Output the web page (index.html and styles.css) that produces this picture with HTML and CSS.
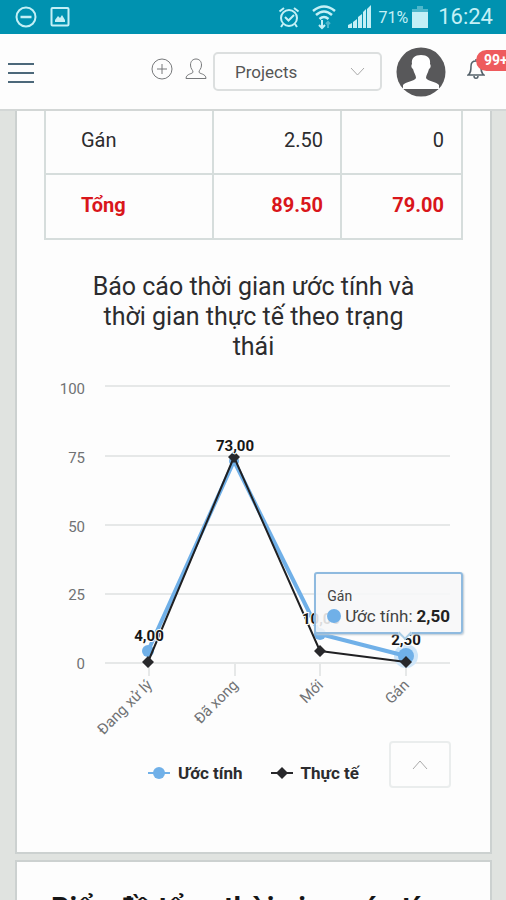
FILE: index.html
```html
<!DOCTYPE html>
<html lang="vi">
<head>
<meta charset="utf-8">
<meta name="viewport" content="width=device-width, initial-scale=1">
<title>Projects</title>
<link rel="stylesheet" href="styles.css">
</head>
<body>
<div class="status-bar">
  <svg width="22" height="22" viewBox="0 0 22 22" fill="none" stroke="currentColor" stroke-width="2"><circle cx="11" cy="11" r="9.5"/><path d="M5.500 11h11" stroke-width="2.500"/></svg>
  <svg class="picture" width="20" height="22" viewBox="0 0 20 22" fill="none" stroke="currentColor" stroke-width="2"><rect x="1.500" y="2" width="17" height="17.500" rx="1"/><path d="M5 16v-2l3-4 2 2 2-3 3 5v2z" fill="currentColor" stroke="none"/></svg>
  <svg class="push" width="22" height="24" viewBox="0 0 22 24" fill="none" stroke="currentColor" stroke-width="2"><circle cx="11" cy="13" r="8"/><path d="M1.500 6.500 6 3M20.500 6.500 16 3M5 19l-2 3M17 19l2 3M7 12l3.500 3.500L16 10"/></svg>
  <svg width="24" height="26" viewBox="0 0 24 26" fill="none" stroke="currentColor" stroke-width="2.500"><path d="M1 7Q12-2 23 7M4 11q8-7 16 0M7.500 15q4.500-4 9 0"/><path d="M10 16v8M7 21l3 3 3-3" stroke-width="2"/><path d="M16 24v-6M14 20l2-2 2 2" stroke-width="2" opacity=".4"/></svg>
  <svg class="signal" width="24" height="24" viewBox="0 0 24 24" fill="currentColor"><path d="M0 20l4-2v5H0zM5 17l4-3v9H5zM10 12l4-3v14h-4zM15 7l3-3v19h-3zM19 4l4-4v23h-4z"/></svg>
  <span class="percent">71%</span>
  <svg width="16" height="24" viewBox="0 0 16 24" fill="currentColor"><path d="M5 1h6v3h5v4H0V4h5z" opacity=".4"/><path d="M0 7h16v16H0z"/></svg>
  <span class="clock">16:24</span>
</div>

<header class="header">
  <button class="icon-button menu" aria-label="Menu"><svg width="26" height="22" viewBox="0 0 26 22" stroke="currentColor" stroke-width="2"><path d="M0 3h26M0 12h26M0 21h26"/></svg></button>
  <button class="icon-button add" aria-label="Add"><svg width="22" height="22" viewBox="0 0 22 22" fill="none" stroke="currentColor"><circle cx="11" cy="11" r="10"/><path d="M11 6v10M6 11h10"/></svg></button>
  <button class="icon-button user" aria-label="User"><svg width="22" height="22" viewBox="0 0 22 22" fill="none" stroke="currentColor"><path d="M8 14c0-2-2.500-3-2.500-7C5.500 3 8 1 11 1s5.500 2 5.500 6c0 4-2.500 5-2.500 7 0 2 7 1.500 7 6.500H1C1 15.500 8 16 8 14z"/></svg></button>
  <div class="picker">
    <select aria-label="Projects"><option>Projects</option></select>
    <svg width="15" height="9" viewBox="0 0 15 9" fill="none" stroke="currentColor"><path d="M1 1l6.500 7L14 1"/></svg>
  </div>
  <button class="icon-button avatar" aria-label="Account"><svg width="50" height="50" viewBox="0 0 50 50"><circle cx="25" cy="25" r="24.500" fill="#58585a"/><path d="M20 31c0-3-2-5-3-9-2-1-2-4-1-5-1-6 3-9 9-9s10 3 9 9c1 1 1 4-1 5-1 4-3 6-3 9 1 3 11 4 13 7v4H7v-4c2-3 12-4 13-7z" fill="#fff"/></svg></button>
  <button class="icon-button bell" aria-label="Notifications"><svg width="18" height="22" viewBox="0 0 18 22" fill="none" stroke="currentColor" stroke-width="1.500"><path d="M1 17c3-2 3-5 3-9 0-3 2-5 5-5s5 2 5 5c0 4 0 7 3 9zM9 3V1M7 18c0 3 4 3 4 0"/></svg><span class="badge">99+</span></button>
</header>

<main class="content">
  <section class="card report">
    <table class="totals">
      <colgroup><col class="col-name"><col class="col-estimate"><col></colgroup>
      <tbody>
        <tr><td>Gán</td><td>2.50</td><td>0</td></tr>
        <tr class="sum"><td>Tổng</td><td>89.50</td><td>79.00</td></tr>
      </tbody>
    </table>
    <h2 class="chart-title">Báo cáo thời gian ước tính và thời gian thực tế theo trạng thái</h2>
    <div class="chart">
      <svg class="plot" viewBox="0 0 419 370">
        <path class="grid" d="M61 16h345M61 86h345M61 155h345M61 224h345M61 293h345M105 293v13M191 293v13M276 293v13M362 293v13"/>
        <g class="axis" text-anchor="end">
          <text x="41" y="24">100</text><text x="41" y="93">75</text><text x="41" y="162">50</text><text x="41" y="230">25</text><text x="41" y="299">0</text>
          <text transform="translate(109 316) rotate(-45)">Đang xử lý</text>
          <text transform="translate(195 316) rotate(-45)">Đã xong</text>
          <text transform="translate(280 316) rotate(-45)">Mới</text>
          <text transform="translate(366 316) rotate(-45)">Gán</text>
        </g>
        <circle cx="362" cy="286" r="12" fill="#cfe6f9"/>
        <path class="line estimate" d="M104 281 190 91 276 264 362 286"/>
        <g fill="#70b0e8"><circle cx="104" cy="281" r="6"/><circle cx="190" cy="91" r="5"/><circle cx="276" cy="264" r="6"/><circle cx="362" cy="286" r="8"/></g>
        <path class="line actual" d="M104 292 190 87 276 281 362 292"/>
        <path fill="#28282b" d="M104 286l6 6-6 6-6-6zM190 81l6 6-6 6-6-6zM276 275l6 6-6 6-6-6zM362 286l6 6-6 6-6-6z"/>
        <g class="value" text-anchor="middle"><text x="105" y="271">4,00</text><text x="191" y="81">73,00</text><text x="277" y="254">10,00</text><text x="362" y="275">2,50</text></g>
      </svg>
      <div class="tooltip">
        <span class="tooltip-name">Gán</span>
        <span class="tooltip-value"><i class="dot"></i>Ước tính: <b>2,50</b></span>
      </div>
    </div>
    <div class="legend">
      <span class="legend-item"><svg width="22" height="14" viewBox="0 0 22 14"><path d="M0 7h22" stroke="#70b0e8" stroke-width="2"/><circle cx="11" cy="7" r="6" fill="#70b0e8"/></svg>Ước tính</span>
      <span class="legend-item"><svg width="22" height="14" viewBox="0 0 22 14"><path d="M0 7h22" stroke="#28282b" stroke-width="2"/><path d="M11 1l6 6-6 6-6-6z" fill="#28282b"/></svg>Thực tế</span>
    </div>
  </section>
  <section class="card next"><h2>Biểu đồ tổng thời gian ước tín</h2></section>
</main>
<button class="to-top" aria-label="Top"><svg width="16" height="10" viewBox="0 0 16 10" fill="none" stroke="currentColor"><path d="M1 9l7-8 7 8"/></svg></button>
</body>
</html>
```
FILE: styles.css
```css
* { box-sizing: border-box; }

body {
  margin: 0;
  height: 100vh;
  overflow: hidden;
  background: #e0e3e0;
  color: #2c2c2e;
  font-family: Roboto, "Liberation Sans", sans-serif;
}

svg { display: block; flex: none; }

.status-bar {
  display: flex;
  align-items: center;
  height: 34px;
  padding: 0 13px 0 15px;
  background: #0092b0;
  color: #c4f0f6;
}
.picture { margin-left: 13px; }
.push { margin-left: auto; }
.push + svg { margin-left: 12px; }
.signal { margin-left: 12px; }
.percent { margin: 0 4px 0 7px; font-size: 16px; }
.clock { margin-left: 10px; font-size: 22px; line-height: 34px; }

.header {
  display: flex;
  align-items: center;
  height: 77px;
  padding: 0 21px 0 8px;
  border-bottom: 2px solid #d3d7d6;
  background: #fdfdfd;
}
.icon-button {
  position: relative;
  padding: 0;
  border: 0;
  background: none;
  color: #77797b;
}
.menu { color: #4c687a; }
.add { margin: 0 12px 6px auto; }
.user { margin: 0 6px 6px 0; }
.picker { position: relative; width: 169px; }
.picker select {
  appearance: none;
  width: 100%;
  height: 39px;
  padding: 0 20px;
  border: 2px solid #dcdfdf;
  border-radius: 5px;
  background: #fdfdfd;
  color: #555;
  font: 17px Roboto, "Liberation Sans", sans-serif;
}
.picker svg {
  position: absolute;
  top: 15px;
  right: 17px;
  color: #aaa;
  pointer-events: none;
}
.avatar { margin: 0 21px 0 14px; }
.bell { margin-bottom: 6px; color: #54616a; }
.badge {
  position: absolute;
  top: -8px;
  left: 9px;
  padding: 0 8px;
  border-radius: 11px;
  background: #ee5b5d;
  color: #fff;
  font: 700 14px/21px Roboto, "Liberation Sans", sans-serif;
}

.card {
  margin: 0 14px 6px 15px;
  border: 2px solid #ccd1d0;
  background: #fdfdfd;
}
.report { padding: 0 27px 69px; border-top: 0; }

.totals {
  width: 100%;
  border-collapse: collapse;
  table-layout: fixed;
  font-size: 20px;
}
.col-name { width: 168px; }
.col-estimate { width: 128px; }
.totals td {
  height: 65px;
  padding: 0 17px;
  border: 2px solid #d6dddc;
  text-align: right;
}
.totals td:first-child { padding-left: 35px; text-align: left; }
.totals tr:first-child td { height: 63px; padding-bottom: 4px; border-top: 0; }
.sum td { padding-bottom: 4px; color: #d9161b; font-weight: 700; }

.chart-title {
  margin: 32px 0 8px;
  padding: 0 36px;
  font-size: 25px;
  font-weight: 400;
  line-height: 30px;
  text-align: center;
}

.chart { position: relative; }
.plot { width: 100%; }
.grid { fill: none; stroke: #e6e8e8; stroke-width: 2; }
.axis { fill: #707274; font-size: 15px; }
.line { fill: none; stroke-linejoin: round; }
.estimate { stroke: #70b0e8; stroke-width: 4; }
.actual { stroke: #202022; stroke-width: 2; }
.value {
  fill: #161616;
  stroke: #fdfdfd;
  stroke-width: 2;
  paint-order: stroke;
  font-size: 15px;
  font-weight: 700;
}
.tooltip {
  position: absolute;
  top: 202px;
  right: 0;
  display: flex;
  flex-direction: column;
  padding: 12px 11px 6px;
  border: 2px solid #8fbadf;
  border-radius: 3px;
  background: rgba(247, 247, 248, .88);
  box-shadow: 1px 1px 2px #bcc8d1;
  color: #444;
}
.tooltip::after {
  content: "";
  position: absolute;
  right: 51px;
  bottom: -6px;
  width: 8px;
  height: 8px;
  border: solid #a9cde6;
  border-width: 0 2px 2px 0;
  background: #f7f7f8;
  transform: rotate(45deg);
}
.tooltip-name { font-size: 14px; line-height: 20px; }
.tooltip-value { display: flex; align-items: center; gap: 4px; font-size: 17px; line-height: 20px; white-space: nowrap; }
.tooltip-value b { color: #222; }
.dot { width: 14px; height: 14px; border-radius: 50%; background: #70b0e8; }

.legend {
  display: flex;
  justify-content: center;
  gap: 28px;
  margin-top: 23px;
  font-size: 17px;
  font-weight: 700;
  line-height: 20px;
}
.legend-item { display: flex; align-items: center; gap: 8px; }

.next { padding: 28px 34px; }
.next h2 {
  margin: 0;
  color: #161616;
  font-size: 29px;
  line-height: 36px;
  white-space: nowrap;
}

.to-top {
  position: fixed;
  right: 55px;
  bottom: 112px;
  display: grid;
  place-items: center;
  width: 62px;
  height: 47px;
  border: 2px solid #eaeded;
  border-radius: 4px;
  background: #fdfdfd;
  color: #aaa;
}
```
